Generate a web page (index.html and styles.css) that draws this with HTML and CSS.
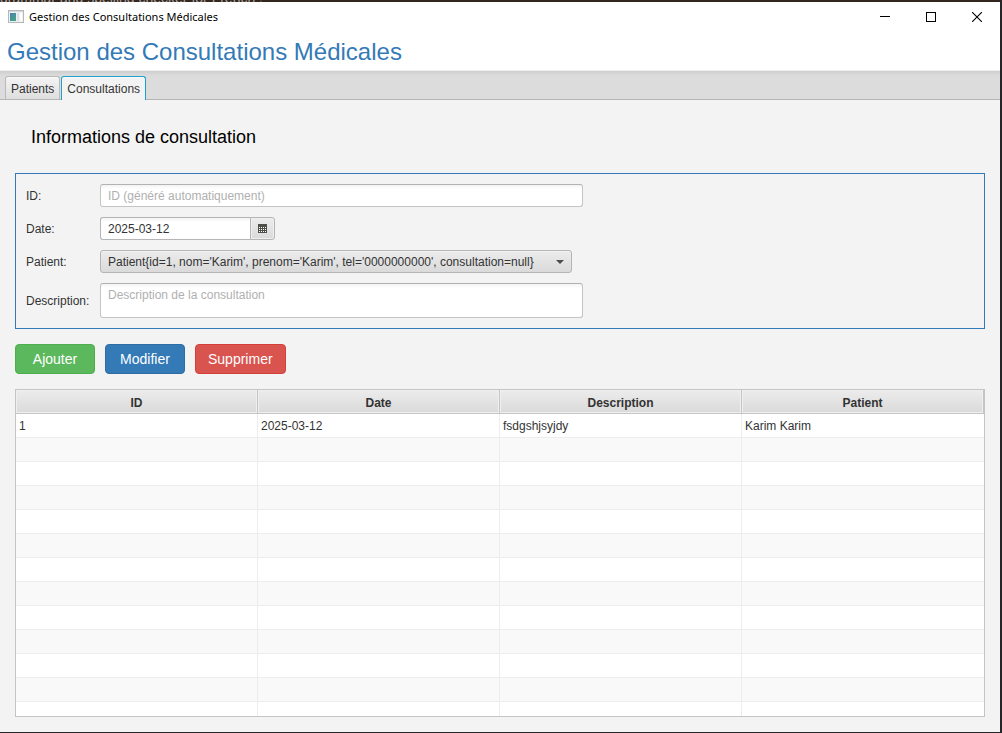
FILE: index.html
```html
<!DOCTYPE html>
<html lang="fr">
<head>
<meta charset="utf-8">
<title>Gestion des Consultations Médicales</title>
<link rel="stylesheet" href="styles.css">
</head>
<body>
<div class="desktop">
  <div class="backdrop" aria-hidden="true">grammar and spelling checker for French !</div>
  <div class="window">
    <header class="titlebar">
      <svg class="app-icon" width="16" height="14" viewBox="0 0 16 14" aria-hidden="true">
        <defs>
          <linearGradient id="pane" x1="0" y1="0" x2="1" y2="1">
            <stop offset="0" stop-color="#4b7fb8"/>
            <stop offset="1" stop-color="#46a878"/>
          </linearGradient>
        </defs>
        <rect x="0.5" y="0.5" width="15" height="12" fill="#eef0f2" stroke="#b4b8bc"/>
        <path d="M1 1.5h14" stroke="#d4d8dc"/>
        <rect x="2" y="3" width="6" height="8" fill="url(#pane)"/>
        <rect x="9" y="3" width="2" height="8" fill="#dde1e6"/>
        <rect x="12" y="3" width="2" height="8" fill="#fff"/>
      </svg>
      <span class="app-title">Gestion des Consultations Médicales</span>
      <div class="window-controls">
        <button type="button" class="window-btn" aria-label="Réduire"><svg width="10" height="10" viewBox="0 0 10 10"><path d="M0 4.5h10" stroke="#000"/></svg></button>
        <button type="button" class="window-btn" aria-label="Agrandir"><svg width="10" height="10" viewBox="0 0 10 10"><rect x="0.5" y="0.5" width="9" height="9" fill="none" stroke="#000"/></svg></button>
        <button type="button" class="window-btn" aria-label="Fermer"><svg width="10" height="10" viewBox="0 0 10 10"><path d="M0 0l10 10M10 0L0 10" stroke="#000" stroke-width="1.1"/></svg></button>
      </div>
    </header>
    <h1 class="heading">Gestion des Consultations Médicales</h1>
    <div class="tabs" role="tablist">
      <button type="button" class="tab" role="tab" aria-selected="false">Patients</button>
      <button type="button" class="tab tab-active" role="tab" aria-selected="true">Consultations</button>
    </div>
    <main class="content">
      <h2 class="section-title">Informations de consultation</h2>
      <form class="form" id="consultation">
        <label for="id">ID:</label>
        <input class="field" id="id" type="text" placeholder="ID (généré automatiquement)">
        <label for="date">Date:</label>
        <div class="date-picker">
          <input class="date-input" id="date" type="text" value="2025-03-12">
          <button type="button" class="date-btn" aria-label="Ouvrir le calendrier">
            <svg width="9" height="9" viewBox="0 0 9 9">
              <rect width="9" height="9" fill="#4f4f4a"/>
              <path d="M1 3.5h7M1 5.5h7M1 7.5h7" stroke="#fff" stroke-dasharray="1 1"/>
            </svg>
          </button>
        </div>
        <label for="patient">Patient:</label>
        <div class="combo">
          <select class="combo-select" id="patient">
            <option>Patient{id=1, nom='Karim', prenom='Karim', tel='0000000000', consultation=null}</option>
          </select>
          <svg class="combo-arrow" width="8" height="4" viewBox="0 0 8 4" aria-hidden="true"><path d="M0 0h8L4 4z" fill="#4c4c4c"/></svg>
        </div>
        <label for="description">Description:</label>
        <textarea class="field field-area" id="description" placeholder="Description de la consultation"></textarea>
      </form>
      <div class="actions">
        <button type="button" class="btn btn-add">Ajouter</button>
        <button type="button" class="btn btn-edit">Modifier</button>
        <button type="button" class="btn btn-delete">Supprimer</button>
      </div>
      <div class="table-view">
        <table class="table">
          <thead><tr><th>ID</th><th>Date</th><th>Description</th><th>Patient</th></tr></thead>
          <tbody>
            <tr><td>1</td><td>2025-03-12</td><td>fsdgshjsyjdy</td><td>Karim Karim</td></tr>
            <tr><td></td><td></td><td></td><td></td></tr>
            <tr><td></td><td></td><td></td><td></td></tr>
            <tr><td></td><td></td><td></td><td></td></tr>
            <tr><td></td><td></td><td></td><td></td></tr>
            <tr><td></td><td></td><td></td><td></td></tr>
            <tr><td></td><td></td><td></td><td></td></tr>
            <tr><td></td><td></td><td></td><td></td></tr>
            <tr><td></td><td></td><td></td><td></td></tr>
            <tr><td></td><td></td><td></td><td></td></tr>
            <tr><td></td><td></td><td></td><td></td></tr>
            <tr><td></td><td></td><td></td><td></td></tr>
            <tr><td></td><td></td><td></td><td></td></tr>
          </tbody>
        </table>
      </div>
    </main>
  </div>
</div>
</body>
</html>
```
FILE: styles.css
```css
* { box-sizing: border-box; }

body {
  margin: 0;
  font: 12px/16px "Liberation Sans", Arial, sans-serif;
  color: #333;
}

button, input, select, textarea { font: inherit; color: inherit; }

.desktop {
  display: flex;
  flex-direction: column;
  height: 100vh;
  padding: 0 2px 1px 0;
  background: #26262a;
}

.backdrop {
  display: flex;
  align-items: flex-end;
  flex: none;
  height: 2px;
  overflow: hidden;
  background: #33261f;
  color: #a8a29c;
  font-size: 14px;
  line-height: 8px;
}

.window {
  display: flex;
  flex-direction: column;
  flex: 1;
  min-height: 0;
  background: #f3f3f3;
}

.titlebar {
  display: flex;
  align-items: center;
  gap: 5px;
  height: 29px;
  padding-left: 8px;
  background: #fff;
  color: #000;
}

.app-title { font: 11px/16px "Noto Sans", sans-serif; }

.window-controls { display: flex; align-self: stretch; margin-left: auto; }

.window-btn {
  display: grid;
  place-items: center;
  width: 46px;
  padding: 0;
  border: 0;
  background: none;
}

.heading {
  margin: 0;
  padding: 9px 7px 6px;
  border-bottom: 1px solid #eee;
  background: #fff;
  color: #337ab7;
  font-size: 24px;
  font-weight: 400;
  line-height: 24px;
}

.tabs {
  display: flex;
  align-items: flex-end;
  gap: 1px;
  height: 29px;
  padding: 0 5px;
  border-bottom: 1px solid #b5b5b5;
  background: linear-gradient(#cfcfcf, #dcdcdc 5px);
}

.tab {
  height: 23px;
  padding: 1px 5px 0;
  border: 1px solid #b9b9b9;
  border-bottom: 0;
  border-radius: 3px 3px 0 0;
  background: linear-gradient(#f4f4f4, #dedede);
  box-shadow: inset 0 1px #fafafa;
}

.tab-active {
  height: 24px;
  margin-bottom: -1px;
  padding-top: 0;
  border-color: #1ea0cf;
  background: #f3f3f3;
}

.content {
  display: flex;
  flex-direction: column;
  flex: 1;
  min-height: 0;
  gap: 15px;
  padding: 15px;
}

.section-title {
  margin: 0;
  padding: 11px 16px 10px;
  color: #000;
  font-size: 18px;
  font-weight: 400;
  line-height: 22px;
}

.form {
  display: grid;
  grid-template-columns: 64px 1fr;
  gap: 10px;
  align-items: center;
  padding: 10px;
  border: 1px solid #337ab7;
}

.field, .date-input {
  height: 23px;
  padding: 0 7px;
  border: 1px solid #c4c4c4;
  border-top-color: #b2b2b2;
  border-radius: 3px;
  background: linear-gradient(#f3f3f3, #fff 4px);
}

.field { width: 100%; max-width: 483px; }
.field::placeholder { color: #b0b0b0; opacity: 1; }

.field-area {
  display: block;
  height: 35px;
  padding: 3px 7px;
  overflow: hidden;
  resize: none;
}

.date-picker { display: flex; width: 175px; }

.date-input {
  flex: 1;
  min-width: 0;
  border-color: #b5b5b5;
  border-right: 0;
  border-radius: 3px 0 0 3px;
}

.date-btn {
  display: grid;
  place-items: center;
  width: 25px;
  padding: 0;
  border: 1px solid #b5b5b5;
  border-radius: 0 3px 3px 0;
  background: linear-gradient(#ececec, #dadada);
  box-shadow: inset 0 0 0 1px #efefef;
}

.combo { position: relative; width: 100%; max-width: 472px; }

.combo-select {
  display: block;
  width: 100%;
  height: 23px;
  padding: 0 24px 0 7px;
  appearance: none;
  border: 1px solid #b5b5b5;
  border-radius: 3px;
  background: linear-gradient(#ececec, #dadada);
  box-shadow: inset 0 1px #f3f3f3;
}

.combo-arrow {
  position: absolute;
  top: 10px;
  right: 8px;
  pointer-events: none;
}

.actions { display: flex; gap: 10px; }

.btn {
  min-width: 80px;
  height: 30px;
  padding: 0 12px;
  border: 1px solid;
  border-radius: 4px;
  color: #fff;
  font-size: 14px;
}

.btn-add { border-color: #4cae4c; background: #5cb85c; }
.btn-edit { border-color: #2e6da4; background: #337ab7; }
.btn-delete { border-color: #d43f3a; background: #d9534f; }

.table-view {
  flex: 1;
  min-height: 0;
  overflow: hidden;
  border: 1px solid #c5c5c5;
  background: #fff;
}

.table {
  width: 100%;
  table-layout: fixed;
  border-spacing: 0;
}

.table th {
  height: 24px;
  padding: 2px 0 0;
  border-right: 1px solid #c5c5c5;
  border-bottom: 1px solid #c5c5c5;
  background: linear-gradient(#ececec, #dadada);
  box-shadow: inset 0 0 0 1px #efefef;
}

.table td {
  height: 24px;
  padding: 0 3px;
  border-right: 1px solid #ededed;
  border-bottom: 1px solid #ededed;
}

.table td:last-child { border-right: 0; }
.table tbody tr:nth-child(even) { background: #f9f9f9; }
```
